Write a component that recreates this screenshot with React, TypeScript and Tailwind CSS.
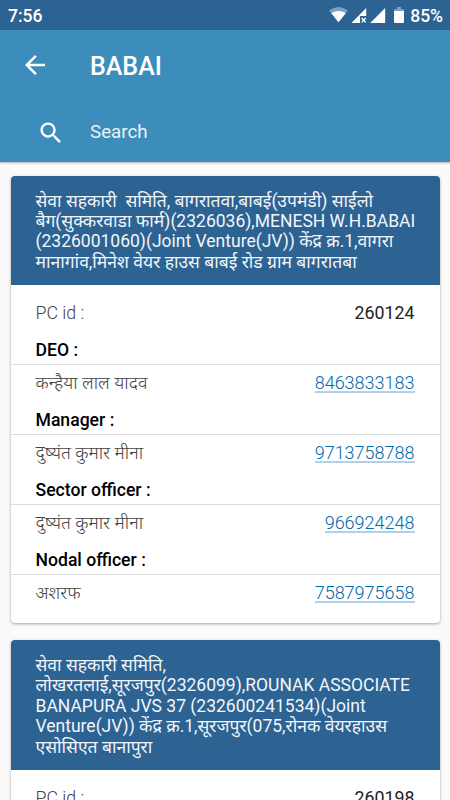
type Officer = {
  role: string;
  name: string;
  phone: string;
};

type Center = {
  id: string;
  title: string[];
  officers: Officer[];
};

const centers: Center[] = [
  {
    id: "260124",
    title: [
      "सेवा सहकारी  समिति, बागरातवा,बाबई(उपमंडी) साईलो",
      "बैग(सुक्करवाडा फार्म)(2326036),MENESH W.H.BABAI",
      "(2326001060)(Joint Venture(JV)) केंद्र क्र.1,वागरा",
      "मानागांव,मिनेश वेयर हाउस बाबई रोड ग्राम बागरातबा",
    ],
    officers: [
      { role: "DEO :", name: "कन्हैया लाल यादव", phone: "8463833183" },
      { role: "Manager :", name: "दुष्यंत कुमार मीना", phone: "9713758788" },
      { role: "Sector officer :", name: "दुष्यंत कुमार मीना", phone: "966924248" },
      { role: "Nodal officer :", name: "अशरफ", phone: "7587975658" },
    ],
  },
  {
    id: "260198",
    title: [
      "सेवा सहकारी समिति,",
      "लोखरतलाई,सूरजपुर(2326099),ROUNAK ASSOCIATE",
      "BANAPURA JVS 37 (232600241534)(Joint",
      "Venture(JV)) केंद्र क्र.1,सूरजपुर(075,रोनक वेयरहाउस",
      "एसोसिएत बानापुरा",
    ],
    officers: [],
  },
];

function StatusBar() {
  return (
    <div className="flex h-[30px] items-center justify-between bg-[#2c6393] pl-2 pr-[7px] text-[17.5px] font-medium text-white">
      <span className="pt-[3px]">7:56</span>
      <div className="flex items-center">
        <svg className="h-[30px] w-[78px]" viewBox="0 0 78 30" fill="#fff">
          <path d="M0 10.5Q9.5 3.5 19 10.5L9.5 22Z" opacity=".4" />
          <path d="M2.3 13.2Q9.5 9 16.7 13.2L9.5 22.3Z" />
          <path d="M37.2 8V16H31V23H22.4Z" />
          <path d="M32.7 18l4 4.4M36.7 18l-4 4.4" stroke="#fff" strokeWidth="1.4" />
          <path d="M56.2 8V23H41.2Z" />
          <path d="M68 7h4v2h3v3H65V9h3z" opacity=".4" />
          <path d="M65 11h10v11a1 1 0 0 1-1 1h-8a1 1 0 0 1-1-1z" />
        </svg>
        <span className="pt-[3px] pl-[3px]">85%</span>
      </div>
    </div>
  );
}

function Header() {
  return (
    <header className="h-[132px] bg-[#3c8dbc] text-white shadow-[0_1px_2px_rgba(0,0,0,0.3)]">
      <div className="flex h-[70px] items-center pl-[20px]">
        <svg className="h-[30px] w-[30px]" viewBox="0 0 24 24" fill="currentColor">
          <path d="M20 11H7.83l5.59-5.59L12 4l-8 8 8 8 1.41-1.41L7.83 13H20v-2z" />
        </svg>
        <h1 className="pt-1 pl-[40px] text-[25px] font-medium">BABAI</h1>
      </div>
      <div className="flex h-[62px] items-center pt-[3px] pl-[37px]">
        <svg className="h-[28px] w-[28px]" viewBox="0 0 24 24" fill="currentColor">
          <path d="M15.5 14h-.79l-.28-.27C15.41 12.59 16 11.11 16 9.5 16 5.91 13.09 3 9.5 3S3 5.91 3 9.5 5.91 16 9.5 16c1.61 0 3.09-.59 4.23-1.57l.27.28v.79l5 4.99L20.49 19l-4.99-5zm-6 0C7.01 14 5 11.99 5 9.5S7.01 5 9.5 5 14 7.01 14 9.5 11.99 14 9.5 14z" />
        </svg>
        <span className="pl-[25px] text-[18.8px] text-[#e8f1f7]">Search</span>
      </div>
    </header>
  );
}

function CenterCard({ center }: { center: Center }) {
  return (
    <section className="shrink-0 overflow-hidden rounded bg-white pb-[12.5px] shadow-[0_1px_3px_rgba(0,0,0,0.35)]">
      <div className="bg-[#2c6393] px-[25px] pt-[15px] pb-[13px] text-[17.5px] leading-[20.4px] text-[#f2f6fa]">
        {center.title.map((line) => (
          <p key={line} className="h-[20.4px] whitespace-pre">{line}</p>
        ))}
      </div>
      <div className="flex h-[45px] items-center justify-between px-[25px] pt-[11px] text-[17.8px]">
        <span className="font-light text-[#444]">PC id :</span>
        <span className="text-[#222]">{center.id}</span>
      </div>
      {center.officers.map((o) => (
        <div key={o.role}>
          <div className="flex h-[35px] items-center border-b border-[#dedede] px-[25px] pt-[7px] text-[17.6px] font-medium text-black">
            {o.role}
          </div>
          <div className="flex h-[35px] items-center justify-between px-[25px] font-light">
            <span className="text-[18.2px] text-[#444]">{o.name}</span>
            <a className="mt-px border-b-2 border-[#b5cfe4] text-[18px] leading-[17px] text-[#0069aa]">{o.phone}</a>
          </div>
        </div>
      ))}
    </section>
  );
}

export default function App() {
  return (
    <div className="flex h-[800px] w-[450px] flex-col overflow-hidden bg-[#fafafa] font-[Roboto,'Noto_Sans',sans-serif]">
      <StatusBar />
      <Header />
      <main className="flex flex-1 flex-col gap-[17.5px] overflow-hidden pt-[13.5px] pr-[10.5px] pl-[10.5px]">
        {centers.map((center) => (
          <CenterCard key={center.id} center={center} />
        ))}
      </main>
    </div>
  );
}
